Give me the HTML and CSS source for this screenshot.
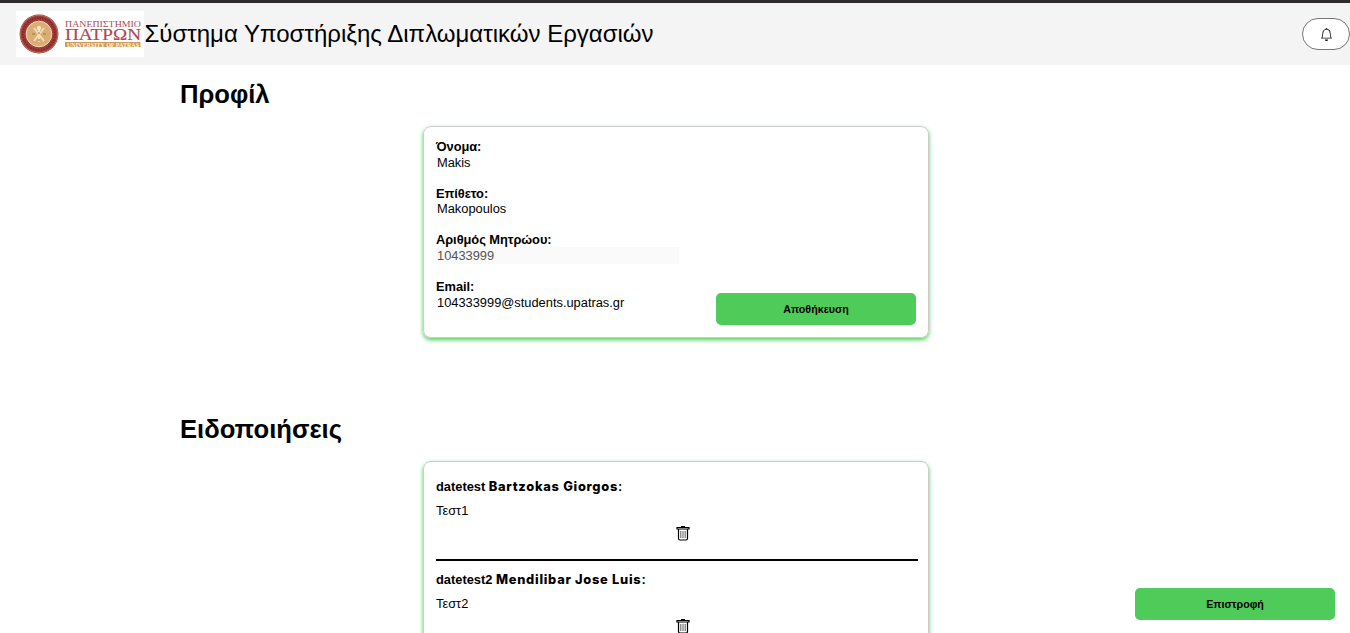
FILE: index.html
```html
<!DOCTYPE html>
<html lang="el">
<head>
<meta charset="utf-8">
<title>Προφίλ</title>
<link rel="stylesheet" href="styles.css">
</head>
<body>
<header class="topbar">
  <svg class="logo" viewBox="0 0 128 46" role="img" aria-label="Πανεπιστήμιο Πατρών">
    <rect width="128" height="46" fill="#fff"/>
    <circle cx="23" cy="23" r="19.4" fill="#a23a38"/>
    <circle cx="23" cy="23" r="18.7" fill="none" stroke="#c08a5c" stroke-width=".7"/>
    <circle cx="23" cy="23" r="16" fill="none" stroke="#7e2a30" stroke-width="2" stroke-dasharray="1.5 1.2"/>
    <circle cx="23" cy="23" r="12.8" fill="#d9ad74" stroke="#f1dcb6" stroke-width="1"/>
    <path d="M18 17l10 13M28 17L18 30M23 15v16" stroke="#f4dfb8" stroke-width="1.800" fill="none"/>
    <circle cx="23" cy="17" r="2.200" fill="#f8e7c8"/>
    <path d="M22 22h2M16 23h3M27 23h3M22 29h2" stroke="#a87343" stroke-width="1"/>
    <text class="logo-name" x="49" y="16" font-size="9.200" textLength="76" lengthAdjust="spacingAndGlyphs">ΠΑΝΕΠΙΣΤΗΜΙΟ</text>
    <text class="logo-name logo-city" x="49" y="29.400" font-size="16.500" textLength="76" lengthAdjust="spacingAndGlyphs">ΠΑΤΡΩΝ</text>
    <rect x="49" y="31" width="75.500" height="5" fill="#cf9b5c"/>
    <text class="logo-sub" x="51" y="35.600" font-size="5.500" textLength="72" lengthAdjust="spacingAndGlyphs">UNIVERSITY OF PATRAS</text>
  </svg>
  <span class="title">Σύστημα Υποστήριξης Διπλωματικών Εργασιών</span>
  <button class="bell" aria-label="Ειδοποιήσεις">
    <svg width="13" height="13" viewBox="0 0 16 16" fill="#111"><path d="M8 16a2 2 0 0 0 2-2H6a2 2 0 0 0 2 2zM8 1.918l-.797.161A4.002 4.002 0 0 0 4 6c0 .628-.134 2.197-.459 3.742-.16.767-.376 1.566-.663 2.258h10.244c-.287-.692-.502-1.490-.663-2.258C12.134 8.197 12 6.628 12 6a4.002 4.002 0 0 0-3.203-3.920L8 1.917zM14.220 12c.223.447.481.801.780 1H1c.299-.199.557-.553.780-1C2.680 10.200 3 6.880 3 6c0-2.420 1.720-4.440 4.005-4.901a1 1 0 1 1 1.990 0A5.002 5.002 0 0 1 13 6c0 .880.320 4.200 1.220 6z"/></svg>
  </button>
</header>
<main class="content">
  <h1 class="heading">Προφίλ</h1>
  <section class="card profile">
    <div class="fields">
      <div class="field"><b>Όνομα:</b><span class="value">Makis</span></div>
      <div class="field"><b>Επίθετο:</b><span class="value">Makopoulos</span></div>
      <div class="field"><b>Αριθμός Μητρώου:</b><span class="value locked">10433999</span></div>
      <div class="field"><b>Email:</b><span class="value">104333999@students.upatras.gr</span></div>
    </div>
    <button class="btn">Αποθήκευση</button>
  </section>
  <h1 class="heading notices-heading">Ειδοποιήσεις</h1>
  <section class="card notices">
    <article class="notice">
      <div class="from">datetest <span class="sender">Bartzokas Giorgos</span>:</div>
      <p class="message">Τεστ1</p>
      <svg class="trash" width="14" height="16" viewBox="0 0 14 16"><path d="M5 1.500h4M1 2.500h12v1.500H1zM2.500 4v9.500q0 1.500 1.500 1.500h6q1.500 0 1.500-1.500V4"/><path class="slats" d="M4.800 6v7M7 6v7M9.200 6v7"/></svg>
    </article>
    <article class="notice">
      <div class="from">datetest2 <span class="sender">Mendilibar Jose Luis</span>:</div>
      <p class="message">Τεστ2</p>
      <svg class="trash" width="14" height="16" viewBox="0 0 14 16"><path d="M5 1.500h4M1 2.500h12v1.500H1zM2.500 4v9.500q0 1.500 1.500 1.500h6q1.500 0 1.500-1.500V4"/><path class="slats" d="M4.800 6v7M7 6v7M9.200 6v7"/></svg>
    </article>
  </section>
</main>
<button class="btn back">Επιστροφή</button>
</body>
</html>
```
FILE: styles.css
```css
* { box-sizing: border-box; }
html { overflow: hidden; }
body {
  margin: 0;
  height: 633px;
  overflow: hidden;
  background: #fff;
  color: #000;
  font-family: "Liberation Sans", Arial, sans-serif;
  font-size: 12.85px;
}
.topbar {
  display: flex;
  align-items: center;
  height: 65px;
  padding-left: 16px;
  border-top: 3px solid #2e2c2d;
  background: #f4f4f4;
}
.logo { width: 128px; height: 46px; flex: none; }
.logo-name { font-family: "Liberation Serif", serif; fill: #ad4a50; }
.logo-city { stroke: #ad4a50; stroke-width: .15; }
.logo-sub { font-family: "Liberation Serif", serif; font-weight: bold; fill: #fff2dc; }
.title { padding-left: .5px; font-size: 24px; line-height: 28px; white-space: nowrap; }
.bell {
  display: flex;
  align-items: center;
  justify-content: center;
  width: 48px;
  height: 32px;
  margin-left: auto;
  padding: 1px 0 0;
  border: 1px solid #777;
  border-radius: 16px;
  background: #fff;
}
.content { padding: 14px 180px 0; }
.heading { margin: 0; font-size: 25.6px; line-height: 30px; font-weight: bold; }
.card {
  width: 506px;
  margin: 17px auto 0 243px;
  padding: 12px;
  border: 1px solid #ccc;
  border-radius: 8px;
  box-shadow: 0 2px 4px #4fcb59;
}
.profile {
  display: flex;
  justify-content: space-between;
  align-items: flex-end;
  height: 212px;
}
.fields { display: flex; flex-direction: column; align-self: flex-start; gap: 14.8px; }
.field { display: flex; flex-direction: column; }
.field b { height: 14.8px; line-height: 15px; letter-spacing: -.05px; }
.value { width: 243px; height: 17px; padding-left: 1px; line-height: 18px; }
.locked { background: #fafafa; color: #545454; }
.btn {
  width: 200px;
  height: 32px;
  padding: 0;
  border: 0;
  border-radius: 5px;
  background: #4fcb59;
  color: #000;
  font: bold 10.7px "Liberation Sans", Arial, sans-serif;
}
.notices-heading { margin-top: 76px; }
.notices { height: 300px; padding-right: 10px; }
.notice { display: flex; flex-direction: column; height: 93px; padding-top: 5px; }
.notice:first-child { height: 87px; border-bottom: 2px solid #000; }
.notice + .notice { padding-top: 11px; }
.from { height: 16px; font-weight: bold; line-height: 16px; white-space: nowrap; }
.sender { font-family: Inter, sans-serif; font-weight: 800; letter-spacing: .72px; }
.message { margin: 8px 0 7px; line-height: 15px; }
.trash { align-self: center; margin-left: 11px; fill: none; stroke: #000; stroke-width: 1.2; }
.slats { stroke: #333; stroke-width: .8; }
.back { position: fixed; right: 15px; bottom: 13px; }
```
